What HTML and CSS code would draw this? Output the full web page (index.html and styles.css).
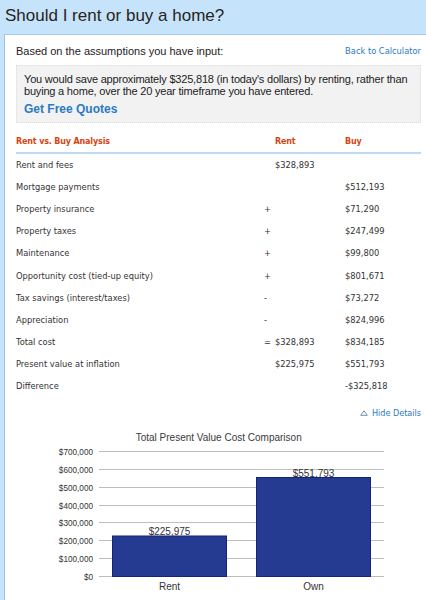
FILE: index.html
```html
<!DOCTYPE html>
<html>
<head>
<meta charset="utf-8">
<link rel="stylesheet" href="styles.css">
</head>
<body>
<h1 class="title">Should I rent or buy a home?</h1>
<div class="panel">
  <div class="intro">
    <span>Based on the assumptions you have input:</span>
    <a class="back">Back to Calculator</a>
  </div>
  <div class="summary">
    <p>You would save approximately $325,818 (in today's dollars) by renting, rather than buying a home, over the 20 year timeframe you have entered.</p>
    <a class="quotes">Get Free Quotes</a>
  </div>
  <div class="analysis">
    <div class="row head"><span>Rent vs. Buy Analysis</span><span></span><span>Rent</span><span>Buy</span></div>
    <div class="row"><span>Rent and fees</span><span></span><span>$328,893</span><span></span></div>
    <div class="row"><span>Mortgage payments</span><span></span><span></span><span>$512,193</span></div>
    <div class="row"><span>Property insurance</span><span>+</span><span></span><span>$71,290</span></div>
    <div class="row"><span>Property taxes</span><span>+</span><span></span><span>$247,499</span></div>
    <div class="row"><span>Maintenance</span><span>+</span><span></span><span>$99,800</span></div>
    <div class="row"><span>Opportunity cost (tied-up equity)</span><span>+</span><span></span><span>$801,671</span></div>
    <div class="row"><span>Tax savings (interest/taxes)</span><span>-</span><span></span><span>$73,272</span></div>
    <div class="row"><span>Appreciation</span><span>-</span><span></span><span>$824,996</span></div>
    <div class="row"><span>Total cost</span><span>=</span><span>$328,893</span><span>$834,185</span></div>
    <div class="row"><span>Present value at inflation</span><span></span><span>$225,975</span><span>$551,793</span></div>
    <div class="row"><span>Difference</span><span></span><span></span><span>-$325,818</span></div>
  </div>
  <div class="details">
    <a class="hide"><svg class="tri" width="8" height="6" viewBox="0 0 8 6"><path d="M4 0.8 L7.3 5.3 L0.7 5.3 Z" fill="none" stroke="#6f8fb0" stroke-width="1"/></svg>Hide Details</a>
  </div>
  <svg class="chart" width="405" height="170" viewBox="0 0 405 170">
    <text class="ctitle" x="202.7" y="16" text-anchor="middle">Total Present Value Cost Comparison</text>
    <g class="grid">
      <line x1="83" x2="368" y1="26.5" y2="26.5"/>
      <line x1="83" x2="368" y1="44.5" y2="44.5"/>
      <line x1="83" x2="368" y1="62.5" y2="62.5"/>
      <line x1="83" x2="368" y1="80.5" y2="80.5"/>
      <line x1="83" x2="368" y1="97.5" y2="97.5"/>
      <line x1="83" x2="368" y1="115.5" y2="115.5"/>
      <line x1="83" x2="368" y1="133.5" y2="133.5"/>
      <line x1="83" x2="368" y1="151.5" y2="151.5"/>
    </g>
    <g class="ylab" text-anchor="end">
      <text x="77" y="29.5">$700,000</text>
      <text x="77" y="47.5">$600,000</text>
      <text x="77" y="65.5">$500,000</text>
      <text x="77" y="83.5">$400,000</text>
      <text x="77" y="100.5">$300,000</text>
      <text x="77" y="118.5">$200,000</text>
      <text x="77" y="136.5">$100,000</text>
      <text x="77" y="154.5">$0</text>
    </g>
    <rect class="bar" x="96.5" y="111" width="114" height="40.5"/>
    <rect class="bar" x="240.5" y="52.5" width="114" height="99"/>
    <g class="blab" text-anchor="middle">
      <text x="153.5" y="110">$225,975</text>
      <text x="297.5" y="52">$551,793</text>
      <text x="153.5" y="164.5">Rent</text>
      <text x="297.5" y="164.5">Own</text>
    </g>
  </svg>
</div>
</body>
</html>
```
FILE: styles.css
```css
html, body {
  margin: 0;
  padding: 0;
}
body {
  background: #c5e3fb;
  font-family: "Liberation Sans", Arial, sans-serif;
  color: #222;
  height: 600px;
  overflow: hidden;
}
.title {
  margin: 0;
  height: 34px;
  box-sizing: border-box;
  padding: 6px 0 0 5px;
  font-size: 17px;
  line-height: 20px;
  font-weight: normal;
  color: #2a2420;
}
.panel {
  margin-left: 4px;
  border-left: 1px solid #9fc3e3;
  border-top: 1px solid #a8cbea;
  background: #fff;
  padding: 0 5px 0 11px;
  height: 565px;
  overflow: hidden;
}
.intro {
  display: flex;
  justify-content: space-between;
  align-items: center;
  height: 30px;
  padding-top: 2px;
  box-sizing: border-box;
  font-size: 11px;
  line-height: 14px;
}
.back {
  font-family: "DejaVu Sans", Verdana, sans-serif;
  font-size: 8.3px;
  color: #2a7ac4;
}
.summary {
  background: #f2f2f2;
  border: 1px dotted #dcdcdc;
  padding: 7px 8px 6px 7px;
}
.summary p {
  margin: 0;
  font-size: 11px;
  letter-spacing: -0.2px;
  line-height: 12px;
  color: #1c1c1c;
}
.quotes {
  display: block;
  margin-top: 5px;
  font-size: 12px;
  line-height: 14px;
  font-weight: bold;
  color: #2a7ac4;
}
.analysis {
  margin-top: 8px;
  font-family: "DejaVu Sans", Verdana, sans-serif;
  font-size: 8.3px;
  color: #333;
}
.row {
  display: grid;
  grid-template-columns: 248px 11px 70px 1fr;
  align-items: center;
  height: 22.1px;
}
.row.head {
  height: 21px;
  border-bottom: 2px solid #c0d9f0;
  font-weight: bold;
  font-size: 8px;
  letter-spacing: -0.15px;
  color: #d4450f;
}
.details {
  display: flex;
  justify-content: flex-end;
  margin-top: 9px;
  height: 14px;
  align-items: center;
}
.hide {
  display: flex;
  align-items: center;
  gap: 4px;
  font-family: "DejaVu Sans", Verdana, sans-serif;
  font-size: 8.1px;
  color: #2a7ac4;
}
.tri {
  display: block;
}
.chart {
  display: block;
  margin-top: 5px;
  font-family: "Liberation Sans", Arial, sans-serif;
}
.ctitle {
  font-size: 10px;
  fill: #3a3a3a;
}
.grid line {
  stroke: #bdbdbd;
  stroke-width: 1;
}
.ylab text {
  font-size: 8.2px;
  fill: #333;
}
.bar {
  fill: #253a91;
  stroke: #142478;
  stroke-width: 1;
}
.blab text {
  font-size: 10px;
  fill: #333;
}
```
